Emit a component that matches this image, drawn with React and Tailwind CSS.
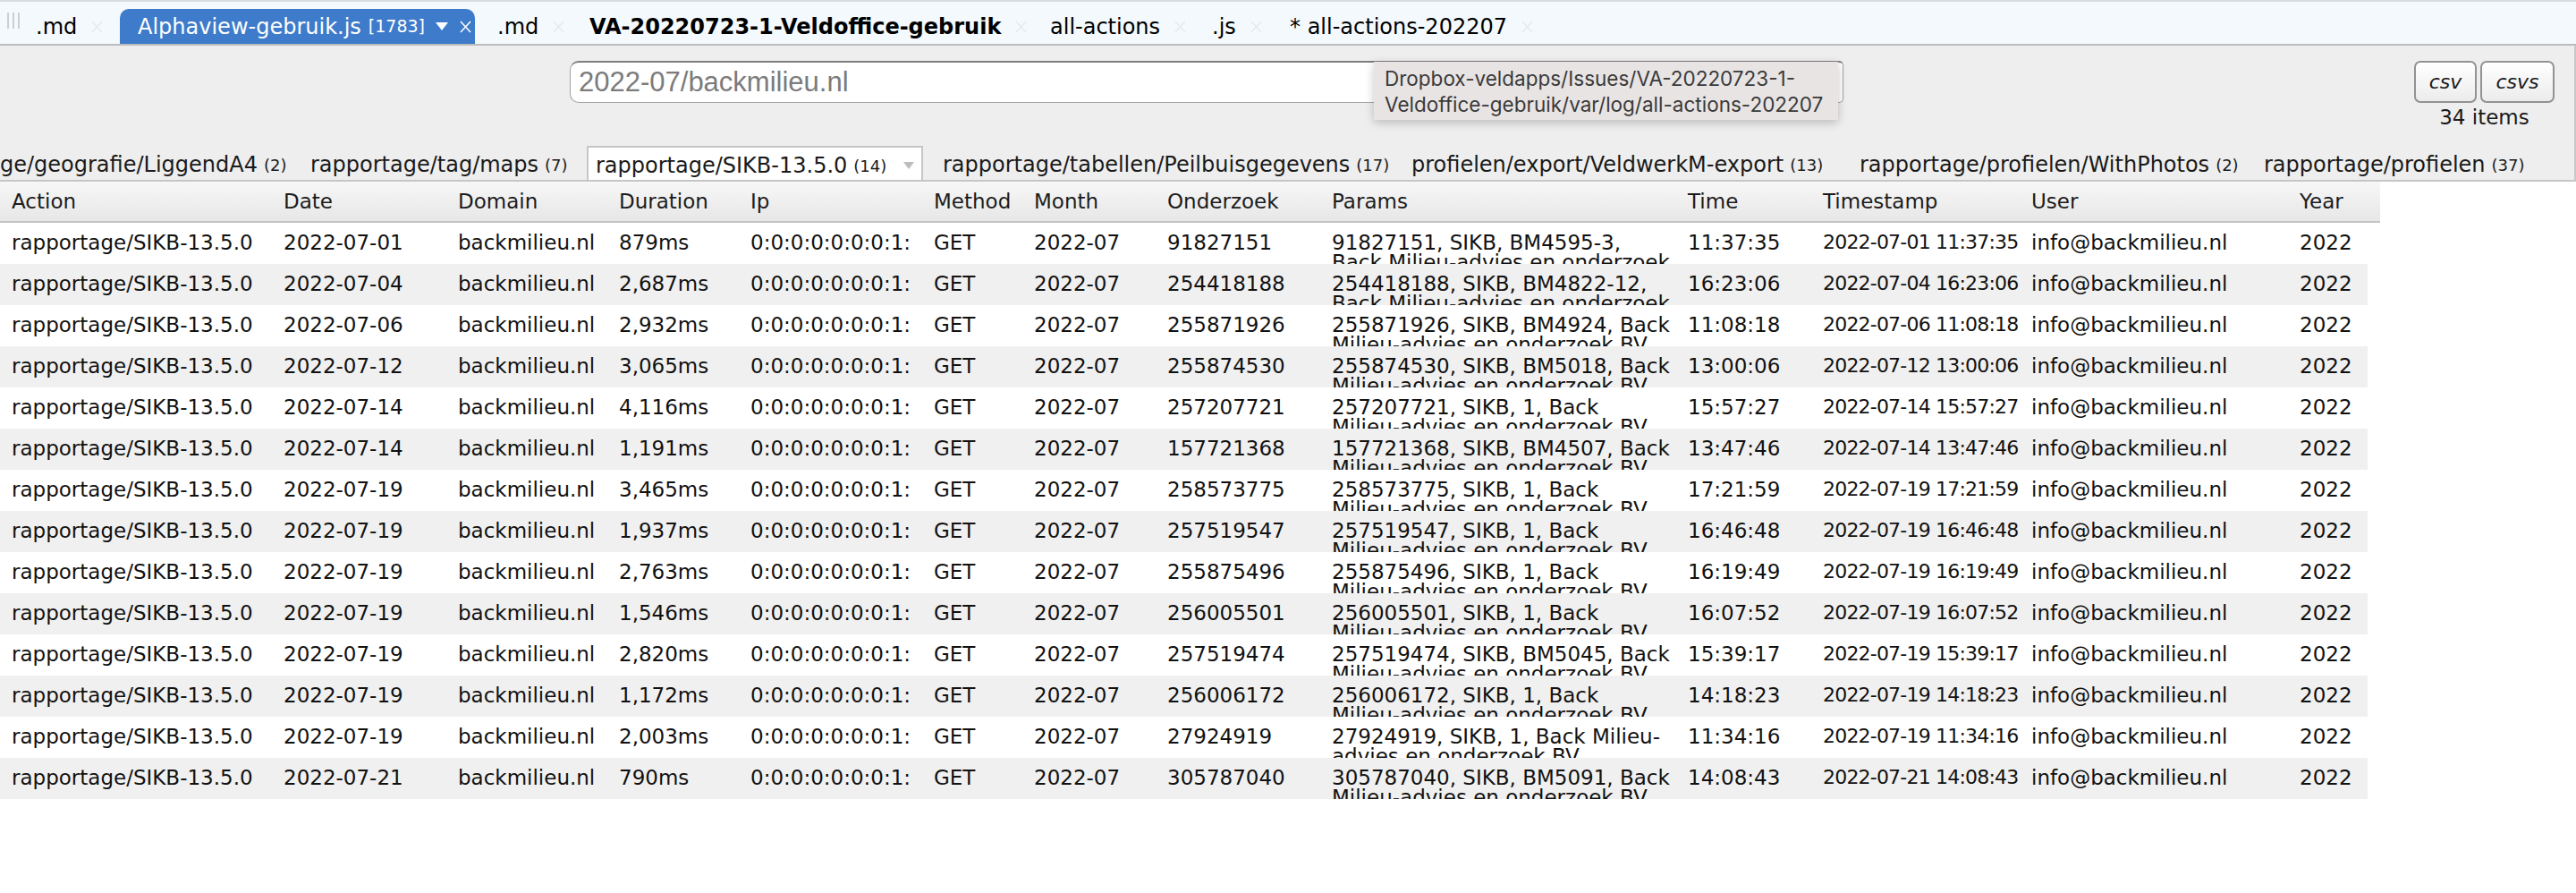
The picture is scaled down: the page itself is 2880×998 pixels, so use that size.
import React from 'react';

const ui = { fontFamily: '"DejaVu Sans", "Noto Sans", sans-serif' };
const sys = { fontFamily: '"Liberation Sans", Arial, sans-serif' };

const cols = [
  ['Action', 'w-[306px]'],
  ['Date', 'w-[195px]'],
  ['Domain', 'w-[180px]'],
  ['Duration', 'w-[147px]'],
  ['Ip', 'w-[205px]'],
  ['Method', 'w-[112px]'],
  ['Month', 'w-[149px]'],
  ['Onderzoek', 'w-[184px]'],
  ['Params', 'w-[398px]'],
  ['Time', 'w-[151px]'],
  ['Timestamp', 'w-[233px]'],
  ['User', 'w-[300px]'],
  ['Year', 'w-[87px]'],
];

// date, duration, onderzoek, params line 1, params line 2, time
const rows = [
  ['2022-07-01', '879ms', '91827151', '91827151, SIKB, BM4595-3,', 'Back Milieu-advies en onderzoek', '11:37:35'],
  ['2022-07-04', '2,687ms', '254418188', '254418188, SIKB, BM4822-12,', 'Back Milieu-advies en onderzoek', '16:23:06'],
  ['2022-07-06', '2,932ms', '255871926', '255871926, SIKB, BM4924, Back', 'Milieu-advies en onderzoek BV', '11:08:18'],
  ['2022-07-12', '3,065ms', '255874530', '255874530, SIKB, BM5018, Back', 'Milieu-advies en onderzoek BV', '13:00:06'],
  ['2022-07-14', '4,116ms', '257207721', '257207721, SIKB, 1, Back', 'Milieu-advies en onderzoek BV', '15:57:27'],
  ['2022-07-14', '1,191ms', '157721368', '157721368, SIKB, BM4507, Back', 'Milieu-advies en onderzoek BV', '13:47:46'],
  ['2022-07-19', '3,465ms', '258573775', '258573775, SIKB, 1, Back', 'Milieu-advies en onderzoek BV', '17:21:59'],
  ['2022-07-19', '1,937ms', '257519547', '257519547, SIKB, 1, Back', 'Milieu-advies en onderzoek BV', '16:46:48'],
  ['2022-07-19', '2,763ms', '255875496', '255875496, SIKB, 1, Back', 'Milieu-advies en onderzoek BV', '16:19:49'],
  ['2022-07-19', '1,546ms', '256005501', '256005501, SIKB, 1, Back', 'Milieu-advies en onderzoek BV', '16:07:52'],
  ['2022-07-19', '2,820ms', '257519474', '257519474, SIKB, BM5045, Back', 'Milieu-advies en onderzoek BV', '15:39:17'],
  ['2022-07-19', '1,172ms', '256006172', '256006172, SIKB, 1, Back', 'Milieu-advies en onderzoek BV', '14:18:23'],
  ['2022-07-19', '2,003ms', '27924919', '27924919, SIKB, 1, Back Milieu-', 'advies en onderzoek BV', '11:34:16'],
  ['2022-07-21', '790ms', '305787040', '305787040, SIKB, BM5091, Back', 'Milieu-advies en onderzoek BV', '14:08:43'],
];

function CloseX({ light }) {
  return (
    <svg width="13" height="14" viewBox="0 0 13 14" className="shrink-0">
      <path d="M1 1 L12 13 M12 1 L1 13" stroke={light ? '#ffffff' : '#e4eaed'} strokeWidth="1.5" fill="none" />
    </svg>
  );
}

function Tab({ w, pl, children, bold }) {
  return (
    <div className={`${w} ${pl} h-[39px] flex items-center gap-[16px] shrink-0`}>
      <span className={`text-[24px] text-black whitespace-nowrap ${bold ? 'font-bold' : ''}`}>{children}</span>
      <CloseX />
    </div>
  );
}

function FilterItem({ w, label, count }) {
  return (
    <div className={`${w} h-[38px] pt-[4px] flex items-center shrink-0 whitespace-nowrap`}>
      <span className="text-[24px] text-[#1a1a1a]">{label}</span>
      <span className="text-[18px] text-[#1a1a1a] ml-[7px]">{count}</span>
    </div>
  );
}

export default function App() {
  return (
    <div className="w-[2880px] h-[998px] overflow-hidden bg-white" style={ui}>
      {/* tab bar */}
      <div className="h-[51px] bg-[#f3f9fc] border-t-2 border-t-[#d5dde1] border-b-2 border-b-[#bcbcbc] flex items-end">
        <div className="w-[40px] h-[39px] flex items-start pt-[4px] pl-[8px] gap-[4px] shrink-0">
          <div className="w-[2px] h-[18px] bg-[#c9cfd2]" />
          <div className="w-[2px] h-[18px] bg-[#c9cfd2]" />
          <div className="w-[2px] h-[18px] bg-[#c9cfd2]" />
        </div>
        <Tab w="w-[94px]" pl="">.md</Tab>
        <div className="w-[397px] h-[39px] bg-[#3e7bca] rounded-t-[10px] flex items-center pl-[20px] shrink-0 text-white whitespace-nowrap">
          <span className="text-[24px]">Alphaview-gebruik.js</span>
          <span className="text-[19px] ml-[8px]">[1783]</span>
          <span className="ml-[12px] mr-[13px] w-0 h-0 border-l-[7px] border-r-[7px] border-t-[9px] border-l-transparent border-r-transparent border-t-white" />
          <CloseX light />
        </div>
        <Tab w="w-[128px]" pl="pl-[25px]">.md</Tab>
        <Tab w="w-[515px]" pl="" bold>VA-20220723-1-Veldoffice-gebruik</Tab>
        <Tab w="w-[181px]" pl="">all-actions</Tab>
        <Tab w="w-[87px]" pl="">.js</Tab>
        <Tab w="w-[300px]" pl="">* all-actions-202207</Tab>
      </div>

      {/* toolbar + filters */}
      <div className="bg-[#eeeeee] border-r-2 border-r-[#c8c8c8]">
        <div className="relative h-[101px] flex items-start">
          <div
            className="ml-[637px] mt-[17px] w-[1424px] h-[47px] rounded-l-[10px] rounded-r-[5px] border border-[#a3a3a3] border-t-2 border-t-[#7f7f7f] bg-white flex items-center pl-[9px] text-[31px] text-[#7b7b7b]"
            style={sys}
          >
            2022-07/backmilieu.nl
          </div>
          <div className="ml-auto mr-[22px] mt-[17px] flex flex-col items-center">
            <div className="flex gap-[4px]">
              <div className="w-[70px] h-[47px] rounded-[7px] border-2 border-[#929292] bg-gradient-to-b from-white to-[#ececec] flex items-center justify-center italic text-[22px] text-[#1a1a1a]">csv</div>
              <div className="w-[83px] h-[47px] rounded-[7px] border-2 border-[#929292] bg-gradient-to-b from-white to-[#ececec] flex items-center justify-center italic text-[22px] text-[#1a1a1a]">csvs</div>
            </div>
            <div className="text-[23px] leading-[30px] text-[#1a1a1a] mt-[1px]">34 items</div>
          </div>
          <div
            className="absolute left-[1536px] top-[18px] w-[519px] h-[65px] bg-[#e8e4e4] shadow-[0_3px_10px_rgba(0,0,0,0.22)] pl-[12px] pt-[4px] text-[22.5px] leading-[29px] text-[#3a3a3a]"
            style={{ fontFamily: 'Inter, "Liberation Sans", sans-serif' }}
          >
            <div className="whitespace-nowrap">Dropbox-veldapps/Issues/VA-20220723-1-</div>
            <div className="whitespace-nowrap">Veldoffice-gebruik/var/log/all-actions-202207</div>
          </div>
        </div>

        <div className="h-[51px] border-b-2 border-b-[#c6c6c6] flex items-end overflow-hidden">
          <FilterItem w="w-[347px]" label="ge/geografie/LiggendA4" count="(2)" />
          <FilterItem w="w-[309px]" label="rapportage/tag/maps" count="(7)" />
          <div className="w-[376px] h-[38px] mr-[22px] pt-[4px] bg-white border-2 border-b-0 border-[#c6c6c6] flex items-center pl-[8px] pr-[8px] shrink-0 whitespace-nowrap">
            <span className="text-[24px] text-[#1a1a1a]">rapportage/SIKB-13.5.0</span>
            <span className="text-[18px] text-[#1a1a1a] ml-[7px]">(14)</span>
            <span className="ml-auto w-0 h-0 border-l-[6px] border-r-[6px] border-t-[8px] border-l-transparent border-r-transparent border-t-[#bdbdbd]" />
          </div>
          <FilterItem w="w-[524px]" label="rapportage/tabellen/Peilbuisgegevens" count="(17)" />
          <FilterItem w="w-[501px]" label="profielen/export/VeldwerkM-export" count="(13)" />
          <FilterItem w="w-[452px]" label="rapportage/profielen/WithPhotos" count="(2)" />
          <FilterItem w="w-[320px]" label="rapportage/profielen" count="(37)" />
        </div>
      </div>

      {/* table */}
      <div className="w-[2661px] h-[46px] bg-gradient-to-b from-[#f7f7f7] to-[#e7e7e7] border-b-2 border-b-[#c4c4c4] flex items-center">
        {cols.map(([name, w], i) => (
          <div
            key={name}
            className={`${i === cols.length - 1 ? 'w-[101px]' : w} ${i === 0 ? 'pl-[13px]' : 'pl-[11px]'} text-[23px] text-[#1c1c1c] whitespace-nowrap overflow-hidden shrink-0`}
          >
            {name}
          </div>
        ))}
      </div>
      <div>
        {rows.map((r, ri) => {
          const cells = [
            'rapportage/SIKB-13.5.0',
            r[0],
            'backmilieu.nl',
            r[1],
            '0:0:0:0:0:0:0:1:',
            'GET',
            '2022-07',
            r[2],
            null,
            r[5],
            `${r[0]} ${r[5]}`,
            'info@backmilieu.nl',
            '2022',
          ];
          return (
            <div
              key={ri}
              className={`w-[2647px] h-[46px] overflow-hidden flex items-start ${ri % 2 === 1 ? 'bg-[#f0f0f0]' : 'bg-white'}`}
            >
              {cells.map((c, ci) =>
                ci === 8 ? (
                  <div
                    key={ci}
                    className={`${cols[ci][1]} pl-[11px] pt-[11px] text-[23px] leading-[22px] text-[#111] whitespace-nowrap overflow-hidden shrink-0`}
                  >
                    <div>{r[3]}</div>
                    <div>{r[4]}</div>
                  </div>
                ) : (
                  <div
                    key={ci}
                    className={`${cols[ci][1]} ${ci === 0 ? 'pl-[13px]' : 'pl-[11px]'} ${ci === 10 ? 'text-[22px] tracking-[-0.8px]' : 'text-[23px]'} pt-[9px] leading-[26px] text-[#111] whitespace-nowrap overflow-hidden shrink-0`}
                  >
                    {c}
                  </div>
                )
              )}
            </div>
          );
        })}
      </div>
    </div>
  );
}
